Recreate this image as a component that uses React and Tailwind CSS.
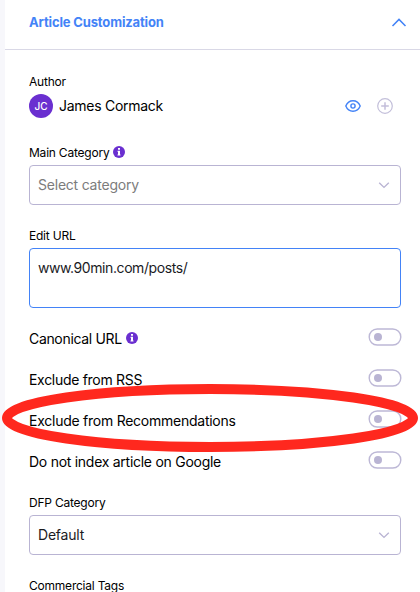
const toggles = [
  { label: 'Canonical URL', tracking: 'tracking-[-0.33px]', info: true },
  { label: 'Exclude from RSS', tracking: 'tracking-[-0.3px]' },
  { label: 'Exclude from Recommendations', tracking: 'tracking-[-0.25px]' },
  { label: 'Do not index article on Google', tracking: 'tracking-[-0.27px]' },
]

function InfoIcon() {
  return (
    <svg className="mb-0.5 size-3 shrink-0" viewBox="0 0 12 12" fill="none">
      <circle cx="6" cy="6" r="6" fill="#6a2fd0" />
      <path d="M5 2h2v1.7H5zM4.6 4.8H7v3.6h.5v1.2h-3V8.4H5V6h-.4z" fill="#fff" />
    </svg>
  )
}

function Chevron() {
  return (
    <svg className="h-[7px] w-3" viewBox="0 0 12 7" fill="none" stroke="#b9b4d3" strokeWidth="1.4">
      <path d="M1.2 .8L6 5.4L10.8 .8" />
    </svg>
  )
}

function Label({ children }) {
  return <div className="flex h-4 items-center gap-1 text-xs leading-4 tracking-[-0.22px]">{children}</div>
}

function Select({ children, placeholder }) {
  return (
    <div className="flex h-10 items-center justify-between rounded-[4px] border border-[#b9b4d3] pr-[10px] pl-2 tracking-[-0.22px]">
      <span className={placeholder ? 'text-[#7c7c7c]' : 'text-[#1b1b1f]'}>{children}</span>
      <Chevron />
    </div>
  )
}

function Toggle() {
  return (
    <svg className="-mt-px -mr-px h-[18px] w-[34px]" viewBox="0 0 34 18" fill="none">
      <rect x="1.2" y="1" width="31.6" height="16" rx="8" stroke="#bdb8d6" strokeWidth="1.4" />
      <circle cx="10" cy="9" r="4" fill="#b9b4d3" />
    </svg>
  )
}

export default function App() {
  return (
    <div className="relative flex h-[592px] w-[420px] overflow-hidden bg-[#f7f7fb] pl-[5px] font-['Inter',sans-serif] text-sm leading-5 text-black">
      <div className="h-full flex-1 bg-white">
        {/* Section header */}
        <header className="flex h-[50px] items-center justify-between border-b border-[#d9d8e6] pr-[13px] pb-1 pl-6">
          <h2 className="pb-px text-[13px] font-bold tracking-[-0.15px] text-[#4383f7]">Article Customization</h2>
          <svg className="h-[9px] w-4" viewBox="0 0 16 9" fill="none" stroke="#4383f7" strokeWidth="1.5">
            <path d="M1.5 8L8 1.4L14.5 8" />
          </svg>
        </header>

        <main className="pr-[19px] pl-6">
          {/* Author */}
          <div className="pt-6">
            <Label>Author</Label>
            <div className="mt-1 flex h-6 items-center">
              <span className="flex size-6 items-center justify-center rounded-full bg-[#6a2fd0] text-[10px] font-medium text-white">JC</span>
              <span className="ml-1.5 tracking-[-0.27px]">James Cormack</span>
              <svg className="ml-auto h-3 w-4" viewBox="0 0 16 12" fill="none" stroke="#4383f7" strokeWidth="1.4">
                <path d="M.8 6C2.2 2.6 4.7.8 8 .8S13.8 2.6 15.2 6C13.8 9.4 11.3 11.2 8 11.2S2.2 9.4.8 6z" />
                <circle cx="8" cy="6" r="2.1" />
              </svg>
              <svg className="mr-2 ml-4 size-4" viewBox="0 0 16 16" fill="none" stroke="#c3bfda" strokeWidth="1.2">
                <circle cx="8" cy="8" r="7.3" />
                <path d="M8 4.2v7.6M4.2 8h7.6" strokeWidth="1.5" />
              </svg>
            </div>
          </div>

          {/* Category */}
          <div className="mt-[27px]">
            <Label>Main Category <InfoIcon /></Label>
            <div className="mt-1">
              <Select placeholder>Select category</Select>
            </div>
          </div>

          {/* URL */}
          <div className="mt-[23px]">
            <Label>Edit URL</Label>
            <div className="mt-1 h-[60px] rounded-[4px] border border-[#4383f7] px-2 py-[9px] tracking-[-0.42px] text-[#1b1b1f]">
              www.90min.com/posts/
            </div>
          </div>

          {/* Switches */}
          <div className="mt-[9px]">
            {toggles.map(({ label, tracking, info }) => (
              <div key={label} className="flex h-[41px] items-center justify-between">
                <span className={`flex items-center gap-1 pt-[3px] ${tracking}`}>
                  {label} {info && <InfoIcon />}
                </span>
                <Toggle />
              </div>
            ))}
          </div>

          {/* DFP */}
          <div className="mt-[14px]">
            <Label>DFP Category</Label>
            <div className="mt-1">
              <Select>Default</Select>
            </div>
          </div>

          <div className="mt-[23px]">
            <Label>Commercial Tags</Label>
          </div>
        </main>
      </div>

      {/* Red highlight ring */}
      <svg className="pointer-events-none absolute top-[383px] left-0 h-[70px] w-[420px]" viewBox="0 0 420 70" fill="none">
        <ellipse cx="210" cy="35" rx="203" ry="29" stroke="#ff281e" strokeWidth="10" />
      </svg>
    </div>
  )
}
